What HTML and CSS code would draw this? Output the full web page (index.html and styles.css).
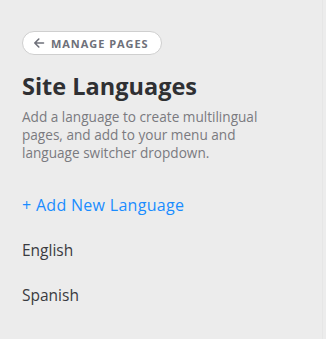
FILE: index.html
```
<!DOCTYPE html>
<html lang="en">
<head>
    <meta charset="UTF-8">
    <meta name="viewport" content="width=device-width, initial-scale=1.0">
    <title>Site Languages</title>
    <link rel="stylesheet" href="styles.css">
</head>
<body>
    <div class="panel">
        <!-- Back link -->
        <button class="back-btn">
            <svg width="12" height="12" viewBox="0 0 12 12" fill="none" stroke="currentColor" stroke-width="1.6" stroke-linecap="round" stroke-linejoin="round">
                <path d="M10.5 6H1.8M5.8 2L1.8 6l4 4"/>
            </svg>
            Manage Pages
        </button>

        <h1>Site Languages</h1>
        <p class="desc">Add a language to create multilingual pages, and add to your menu and language switcher dropdown.</p>

        <a class="add-link" href="#">+ Add New Language</a>

        <ul class="lang-list">
            <li>English</li>
            <li>Spanish</li>
        </ul>
    </div>
</body>
</html>
```

FILE: styles.css
```
body {
    margin: 0;
    background: #ececec;
    font-family: "Open Sans", Lato, sans-serif;
}
.panel {
    width: 323px;
    min-height: 339px;
    padding: 31px 0 0 22px;
    box-sizing: border-box;
    border-right: 1px solid #e6e6e6;
}
.back-btn {
    display: flex;
    align-items: center;
    gap: 6px;
    height: 24px;
    padding: 0 12px 0 10px;
    background: #fff;
    border: 1px solid #cfcfcf;
    border-radius: 12px;
    color: #6e7079;
    font-family: inherit;
    font-size: 11px;
    font-weight: 700;
    letter-spacing: 0.95px;
    text-transform: uppercase;
}
h1 {
    margin: 16px 0 0;
    font-size: 23.5px;
    font-weight: 700;
    color: #2f3033;
    line-height: 30px;
}
.desc {
    margin: 7px 0 0;
    font-size: 13.6px;
    line-height: 18px;
    color: #7a7a7f;
    width: 262px;
}
.add-link {
    display: block;
    margin-top: 33px;
    font-size: 16px;
    line-height: 21px;
    color: #1a8cff;
    text-decoration: none;
    letter-spacing: 0.3px;
}
.lang-list {
    list-style: none;
    margin: 0;
    padding: 0;
}
.lang-list li {
    margin-top: 23px;
    font-size: 15.5px;
    line-height: 22px;
    color: #3a3b3f;
}
```
